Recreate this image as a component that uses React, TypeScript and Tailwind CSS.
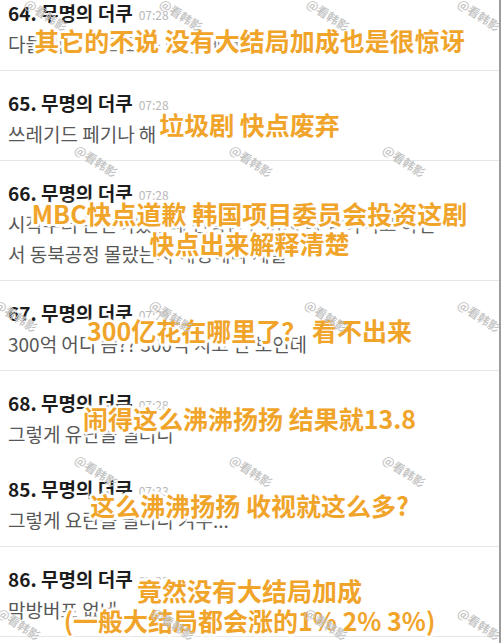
type Comment = {
  no: number;
  time: string;
  lines: string[];
  sub: string[];
  box: string;
  subPos: string;
};

const comments: Comment[] = [
  {
    no: 64,
    time: "07:28",
    lines: ["다들 막방 버프도 못 받은 게 제일 놀랍네"],
    sub: ["其它的不说 没有大结局加成也是很惊讶"],
    box: "pt-0 pb-[11px] border-b",
    subPos: "top-[25px]",
  },
  {
    no: 65,
    time: "07:28",
    lines: ["쓰레기드 페기나 해"],
    sub: ["垃圾剧 快点废弃"],
    box: "pt-[19px] pb-[11px] border-b",
    subPos: "top-[38px]",
  },
  {
    no: 66,
    time: "07:28",
    lines: [
      "시작부터 논란이었는데 진흥원 돈까지 다 받아먹고 하면",
      "서 동북공정 몰랐는지 해명해라 제발",
    ],
    sub: ["MBC快点道歉 韩国项目委员会投资这剧", "快点出来解释清楚"],
    box: "pt-[19px] pb-[11px] border-b",
    subPos: "top-[37px]",
  },
  {
    no: 67,
    time: "07:28",
    lines: ["300억 어디 씀?? 300억 치고 안 보인데"],
    sub: ["300亿花在哪里了？ 看不出来"],
    box: "pt-[19px] pb-[11px] border-b",
    subPos: "top-[34px]",
  },
  {
    no: 68,
    time: "07:28",
    lines: ["그렇게 유난을 떨더니"],
    sub: ["闹得这么沸沸扬扬 结果就13.8"],
    box: "pt-[19px] pb-[8px]",
    subPos: "top-[32px]",
  },
  {
    no: 85,
    time: "07:33",
    lines: ["그렇게 요란을 떨더니 겨우..."],
    sub: ["这么沸沸扬扬 收视就这么多?"],
    box: "pt-[19px] pb-[11px] border-b",
    subPos: "top-[33px]",
  },
  {
    no: 86,
    time: "07:33",
    lines: ["막방버프 없네"],
    sub: ["竟然没有大结局加成", "(一般大结局都会涨的1% 2% 3%)"],
    box: "pt-[19px] pb-[11px] border-b",
    subPos: "top-[28px]",
  },
];

// watermark spots, laid out like the tiled "@看韩影" stamp
const marks = [
  "left-[30px] top-[-4px]",
  "left-[165px] top-[-4px]",
  "left-[312px] top-[-4px]",
  "left-[463px] top-[-4px]",
  "left-[80px] top-[142px]",
  "left-[235px] top-[142px]",
  "left-[388px] top-[142px]",
  "left-[0px] top-[297px]",
  "left-[155px] top-[297px]",
  "left-[310px] top-[297px]",
  "left-[463px] top-[297px]",
  "left-[80px] top-[452px]",
  "left-[235px] top-[452px]",
  "left-[388px] top-[452px]",
  "left-[3px] top-[605px]",
  "left-[157px] top-[605px]",
  "left-[310px] top-[605px]",
  "left-[463px] top-[605px]",
];

function CommentRow({ c }: { c: Comment }) {
  return (
    <div className={`relative px-2 border-[#e6e6e6] ${c.box}`}>
      <div className="flex h-[26px] items-center gap-[6px] overflow-visible">
        <span className="text-[19px] leading-[26px] font-bold text-[#1c1c1c]">
          {c.no}. 무명의 더쿠
        </span>
        <span className="mt-[3px] text-[12px] leading-[14px] text-[#b8b8b8]">
          {c.time}
        </span>
      </div>
      <div className="mt-[3px]">
        {c.lines.map((l) => (
          <div
            key={l}
            className="h-[30px] text-[19px] leading-[30px] text-[#575757] whitespace-nowrap overflow-hidden"
          >
            {l}
          </div>
        ))}
      </div>
      <div
        className={`absolute left-0 right-0 ${c.subPos} text-center text-[25px] leading-[30px] font-bold text-[#f0a42a] [font-family:'Noto_Sans_CJK_SC','Noto_Sans',sans-serif] [text-shadow:3px_0_0_#fff,-3px_0_0_#fff,0_3px_0_#fff,0_-3px_0_#fff,2px_2px_0_#fff,-2px_-2px_0_#fff,2px_-2px_0_#fff,-2px_2px_0_#fff,0_0_7px_#fff,0_0_7px_#fff]`}
      >
        {c.sub.map((s) => (
          <div key={s} className="h-[30px] whitespace-nowrap">
            {s}
          </div>
        ))}
      </div>
    </div>
  );
}

export default function App() {
  return (
    <div className="relative min-h-screen w-[501px] overflow-hidden bg-white border-r-2 border-[#9c9c9c] [font-family:'Noto_Sans_CJK_KR','Noto_Sans',sans-serif]">
      {comments.map((c) => (
        <CommentRow key={c.no} c={c} />
      ))}
      {marks.map((m) => (
        <span
          key={m}
          className={`absolute ${m} origin-top-left rotate-[33deg] text-[12px] leading-[14px] font-medium text-[#c2c2c2] whitespace-nowrap pointer-events-none [font-family:'Noto_Sans_CJK_SC',sans-serif]`}
        >
          @看韩影
        </span>
      ))}
    </div>
  );
}
